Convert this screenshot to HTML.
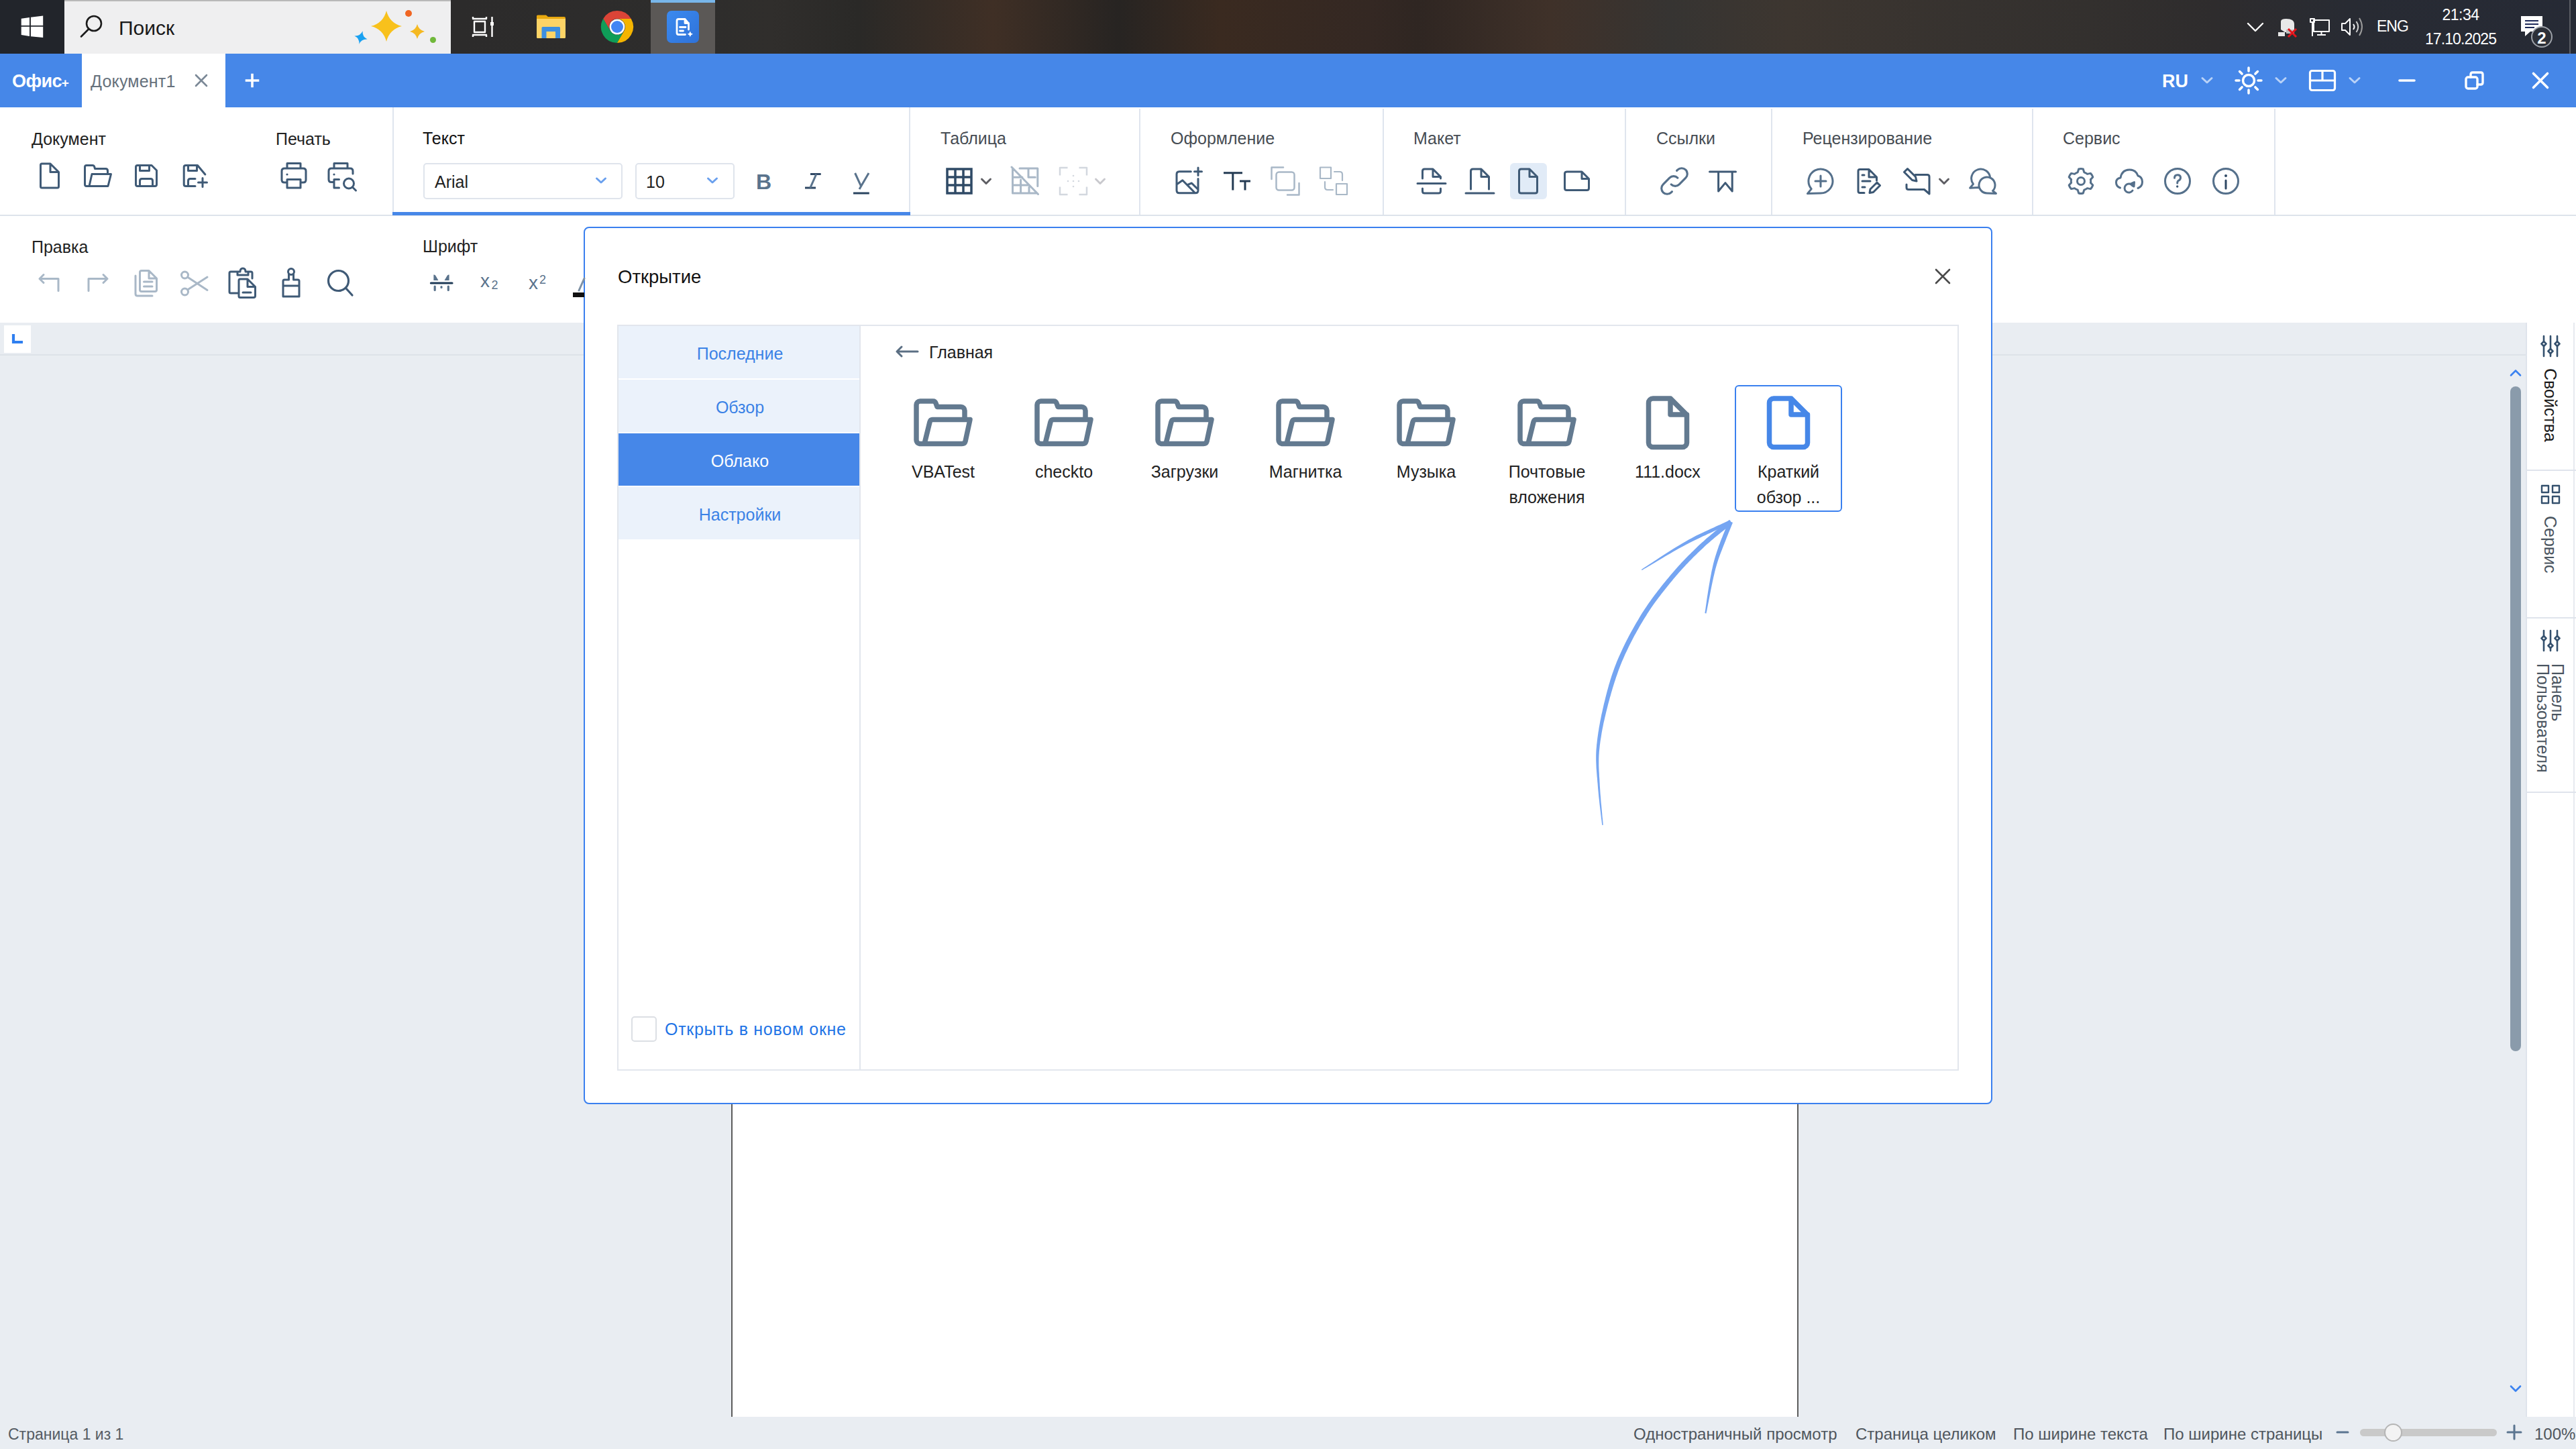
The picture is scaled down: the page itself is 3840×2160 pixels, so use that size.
<!DOCTYPE html>
<html><head><meta charset="utf-8">
<style>
*{box-sizing:border-box;margin:0;padding:0}
html,body{width:3840px;height:2160px;overflow:hidden;background:#e9edf2;font-family:"Liberation Sans",sans-serif}
.a{position:absolute}
.t{position:absolute;line-height:1;white-space:nowrap}
svg{position:absolute;overflow:visible}
</style></head><body>

<div class='a' style='left:0px;top:0px;width:3840px;height:80px;background:linear-gradient(90deg,#23262c 0,#2c2b2b 680px,#2e2d2c 1060px,#302e2c 1150px,#2a2927 1280px,#3f2f25 1480px,#272422 1667px,#3a2a20 1819px,#342823 2042px,#2f2622 2114px,#3f3129 2310px,#363432 2490px,#3d3630 2667px,#36322f 2935px,#33302e 3114px,#2e2c2d 3300px,#282b33 3500px,#262a35 3840px);'></div>
<div class='a' style='left:0px;top:0px;width:96px;height:80px;background:#22252b;'></div>
<div class='a' style='left:96px;top:0px;width:576px;height:80px;background:#efeff0;border-top:2px solid #b9b9b9'></div>
<div class='t' style='left:177px;top:27.0px;font-size:30px;color:#1a1a1a;'>Поиск</div>
<div class='a' style='left:970px;top:0px;width:96px;height:80px;background:#5b5856;'></div>
<div class='a' style='left:970px;top:0px;width:96px;height:4px;background:#78b6ea;'></div>
<div class='a' style='left:0px;top:80px;width:3840px;height:80px;background:#4687e8;'></div>
<div class='a' style='left:122px;top:80px;width:214px;height:80px;background:#ffffff;'></div>
<div class='t' style='left:18px;top:107.5px;font-size:27px;color:#ffffff;font-weight:700;letter-spacing:-0.6px;'>Офис<span style='font-size:19px'>+</span></div>
<div class='t' style='left:135px;top:109.1px;font-size:25px;color:#66717c;letter-spacing:0.2px;'>Документ1</div>
<div class='a' style='left:0px;top:160px;width:3840px;height:321px;background:#ffffff;'></div>
<div class='a' style='left:0px;top:320px;width:3840px;height:2px;background:#dde3eb;'></div>
<div class='a' style='left:585px;top:160px;width:772px;height:161px;background:#ffffff;border-left:2px solid #dfe5ee;border-right:2px solid #dfe5ee'></div>
<div class='a' style='left:585px;top:316px;width:772px;height:5px;background:#4687e8;'></div>
<div class='a' style='left:1698px;top:162px;width:2px;height:158px;background:#dfe5ee;'></div>
<div class='a' style='left:2061px;top:162px;width:2px;height:158px;background:#dfe5ee;'></div>
<div class='a' style='left:2422px;top:162px;width:2px;height:158px;background:#dfe5ee;'></div>
<div class='a' style='left:2640px;top:162px;width:2px;height:158px;background:#dfe5ee;'></div>
<div class='a' style='left:3029px;top:162px;width:2px;height:158px;background:#dfe5ee;'></div>
<div class='a' style='left:3390px;top:162px;width:2px;height:158px;background:#dfe5ee;'></div>
<div class='t' style='left:47px;top:195.1px;font-size:25px;color:#222222;'>Документ</div>
<div class='t' style='left:411px;top:195.1px;font-size:25px;color:#222222;'>Печать</div>
<div class='t' style='left:630px;top:194.1px;font-size:25px;color:#111111;'>Текст</div>
<div class='t' style='left:1402px;top:194.1px;font-size:25px;color:#474d54;'>Таблица</div>
<div class='t' style='left:1745px;top:194.1px;font-size:25px;color:#474d54;'>Оформление</div>
<div class='t' style='left:2107px;top:194.1px;font-size:25px;color:#474d54;'>Макет</div>
<div class='t' style='left:2469px;top:194.1px;font-size:25px;color:#474d54;'>Ссылки</div>
<div class='t' style='left:2687px;top:194.1px;font-size:25px;color:#474d54;'>Рецензирование</div>
<div class='t' style='left:3075px;top:194.1px;font-size:25px;color:#474d54;'>Сервис</div>
<div class='t' style='left:47px;top:356.1px;font-size:25px;color:#222222;'>Правка</div>
<div class='t' style='left:630px;top:355.1px;font-size:25px;color:#222222;'>Шрифт</div>
<div class='a' style='left:631px;top:243px;width:297px;height:54px;background:#ffffff;border:2px solid #dfe4ec;border-radius:5px'></div>
<div class='a' style='left:947px;top:243px;width:148px;height:54px;background:#ffffff;border:2px solid #dfe4ec;border-radius:5px'></div>
<div class='t' style='left:648px;top:259.1px;font-size:25px;color:#222222;'>Arial</div>
<div class='t' style='left:963px;top:259.1px;font-size:25px;color:#222222;'>10</div>
<div class='a' style='left:0px;top:482px;width:3765px;height:48px;background:#e9edf2;border-bottom:2px solid #dde2e8'></div>
<div class='a' style='left:6px;top:485px;width:40px;height:41px;background:#ffffff;'></div>
<div class='a' style='left:1090px;top:530px;width:1591px;height:1582px;background:#ffffff;border-left:2px solid #5c5c5c;border-right:2px solid #5c5c5c'></div>
<div class='a' style='left:3765px;top:481px;width:75px;height:1631px;background:#ffffff;border-left:2px solid #dfe4ec'></div>
<div class='a' style='left:3836px;top:481px;width:2px;height:1631px;background:#e6e9ef;'></div>
<div class='a' style='left:3767px;top:700px;width:73px;height:2px;background:#dfe4ec;'></div>
<div class='a' style='left:3767px;top:920px;width:73px;height:2px;background:#dfe4ec;'></div>
<div class='a' style='left:3767px;top:1180px;width:73px;height:2px;background:#dfe4ec;'></div>
<div class='a' style='left:3742px;top:576px;width:16px;height:991px;background:#8a9bab;border-radius:8px'></div>
<div class='a' style='left:0px;top:2112px;width:3840px;height:48px;background:#e9edf2;'></div>
<div class='t' style='left:12px;top:2126.8px;font-size:23px;color:#555c63;'>Страница 1 из 1</div>
<div class='t' style='left:2435px;top:2126.0px;font-size:24px;color:#4f565d;'>Одностраничный просмотр</div>
<div class='t' style='left:2766px;top:2126.0px;font-size:24px;color:#4f565d;'>Страница целиком</div>
<div class='t' style='left:3001px;top:2126.0px;font-size:24px;color:#4f565d;'>По ширине текста</div>
<div class='t' style='left:3225px;top:2126.0px;font-size:24px;color:#4f565d;'>По ширине страницы</div>
<div class='t' style='left:3778px;top:2126.0px;font-size:24px;color:#4f565d;'>100%</div>
<div class='a' style='left:3518px;top:2130px;width:204px;height:11px;background:#c9c9c9;border-radius:6px'></div>
<div class='a' style='left:3554px;top:2122px;width:27px;height:27px;background:#f3f3f3;border:2px solid #b5b5b5;border-radius:50%'></div>
<div class='a' style='left:870px;top:338px;width:2100px;height:1308px;background:#ffffff;border:2px solid #3a80ef;border-radius:8px'></div>
<div class='t' style='left:921px;top:399.0px;font-size:27.5px;color:#111111;'>Открытие</div>
<div class='a' style='left:920px;top:484px;width:2000px;height:1112px;background:transparent;border:2px solid #e2e6ed'></div>
<div class='a' style='left:1281px;top:486px;width:2px;height:1108px;background:#e2e6ed;'></div>
<div class='a' style='left:922px;top:486px;width:359px;height:78px;background:#ebf2fb;'></div>
<div class='a' style='left:922px;top:566px;width:359px;height:78px;background:#ebf2fb;'></div>
<div class='a' style='left:922px;top:646px;width:359px;height:78px;background:#4687e8;'></div>
<div class='a' style='left:922px;top:726px;width:359px;height:78px;background:#ebf2fb;'></div>
<div class='t' style='left:1103px;top:515.1px;font-size:25px;color:#3b82e6;transform:translateX(-50%);'>Последние</div>
<div class='t' style='left:1103px;top:595.1px;font-size:25px;color:#3b82e6;transform:translateX(-50%);'>Обзор</div>
<div class='t' style='left:1103px;top:675.1px;font-size:25px;color:#ffffff;transform:translateX(-50%);'>Облако</div>
<div class='t' style='left:1103px;top:755.1px;font-size:25px;color:#3b82e6;transform:translateX(-50%);'>Настройки</div>
<div class='t' style='left:1385px;top:513.1px;font-size:25px;color:#222222;'>Главная</div>
<div class='a' style='left:941px;top:1515px;width:38px;height:38px;background:#ffffff;border:2px solid #dcdfe4;border-radius:5px'></div>
<div class='t' style='left:991px;top:1522.1px;font-size:25px;color:#1f74e6;letter-spacing:0.7px;'>Открыть в новом окне</div>
<div class='t' style='left:1406px;top:691.1px;font-size:25px;color:#222222;transform:translateX(-50%);'>VBATest</div>
<div class='t' style='left:1586px;top:691.1px;font-size:25px;color:#222222;transform:translateX(-50%);'>checkto</div>
<div class='t' style='left:1766px;top:691.1px;font-size:25px;color:#222222;transform:translateX(-50%);'>Загрузки</div>
<div class='t' style='left:1946px;top:691.1px;font-size:25px;color:#222222;transform:translateX(-50%);'>Магнитка</div>
<div class='t' style='left:2126px;top:691.1px;font-size:25px;color:#222222;transform:translateX(-50%);'>Музыка</div>
<div class='t' style='left:2306px;top:691.1px;font-size:25px;color:#222222;transform:translateX(-50%);'>Почтовые</div>
<div class='t' style='left:2306px;top:729.1px;font-size:25px;color:#222222;transform:translateX(-50%);'>вложения</div>
<div class='t' style='left:2486px;top:691.1px;font-size:25px;color:#222222;transform:translateX(-50%);'>111.docx</div>
<div class='a' style='left:2586px;top:574px;width:160px;height:189px;background:transparent;border:2px solid #3a80ef;border-radius:6px'></div>
<div class='t' style='left:2666px;top:691.1px;font-size:25px;color:#222222;transform:translateX(-50%);'>Краткий</div>
<div class='t' style='left:2666px;top:729.1px;font-size:25px;color:#222222;transform:translateX(-50%);'>обзор ...</div>
<svg style='left:50.0px;top:238.0px' width='48' height='48' viewBox='-24.0 -24.0 48 48' fill='none' stroke='#3f5a76' stroke-width='3' stroke-linecap='round' stroke-linejoin='round' ><path d='M-13.5 -16 Q-13.5 -18 -11.5 -18 H1 L13.5 -5.5 V16 Q13.5 18 11.5 18 H-11.5 Q-13.5 18 -13.5 16 Z M1 -18 V-5.5 H13.5'/></svg>
<svg style='left:122.0px;top:238.0px' width='48' height='48' viewBox='-24.0 -24.0 48 48' fill='none' stroke='#3f5a76' stroke-width='3' stroke-linecap='round' stroke-linejoin='round' ><path d='M-9 -2.5 H19.5 L15 15.5 H-17 Q-19.5 15.5 -19.5 13 V-13 Q-19.5 -15.5 -17 -15.5 H-8 Q-6 -15.5 -5.3 -13.5 L-4.5 -10.5 H11.5 Q14.5 -10.5 14.5 -7.5 V-2.5 M-9 -2.5 L-13 15.5'/></svg>
<svg style='left:194.0px;top:238.0px' width='48' height='48' viewBox='-24.0 -24.0 48 48' fill='none' stroke='#3f5a76' stroke-width='3' stroke-linecap='round' stroke-linejoin='round' ><path d='M-13 -15.5 H8 L15.5 -8 V13 Q15.5 15.5 13 15.5 H-13 Q-15.5 15.5 -15.5 13 V-13 Q-15.5 -15.5 -13 -15.5 Z M-9.5 -15.5 V-7.5 H4.5 V-15.5 M-9.5 15.5 V7.5 Q-9.5 4.5 -6.5 4.5 H6.5 Q9.5 4.5 9.5 7.5 V15.5'/></svg>
<svg style='left:267.0px;top:238.0px' width='48' height='48' viewBox='-24.0 -24.0 48 48' fill='none' stroke='#3f5a76' stroke-width='3' stroke-linecap='round' stroke-linejoin='round' ><path d='M14.8 -2 L3.5 -15.5 H-14 Q-16.8 -15.5 -16.8 -13 V13 Q-16.8 15.5 -14 15.5 H0 M-10.5 -15.5 V-7.5 H2.5 V-15.5 M-10.5 15.5 V7.5 Q-10.5 4.5 -7.5 4.5 H0 M4.5 10 H17.5 M11 3.5 V16.5'/></svg>
<svg style='left:414.0px;top:238.0px' width='48' height='48' viewBox='-24.0 -24.0 48 48' fill='none' stroke='#3f5a76' stroke-width='3' stroke-linecap='round' stroke-linejoin='round' ><path d='M-10 -11 V-18.5 H10 V-11 M-10 10 H-14 Q-18 10 -18 6 V-7 Q-18 -11 -14 -11 H14 Q18 -11 18 -7 V6 Q18 10 14 10 H10 M-10 5.5 H10 V18 H-10 Z'/><circle cx='-10' cy='-2' r='1.6' fill='#3f5a76' stroke='none'/></svg>
<svg style='left:486.0px;top:238.0px' width='48' height='48' viewBox='-24.0 -24.0 48 48' fill='none' stroke='#3f5a76' stroke-width='3' stroke-linecap='round' stroke-linejoin='round' ><path d='M-12 -11 V-18.5 H8 V-11 M-12 9.5 H-16 Q-20 9.5 -20 5.5 V-7 Q-20 -11 -16 -11 H12 Q16 -11 16 -7 V-3 M-4.5 5.5 H-12 V18 H-4.5'/><circle cx='-12' cy='-2' r='1.6' fill='#3f5a76' stroke='none'/><circle cx='10' cy='11.5' r='7.5'/><path d='M15.5 17 L20.5 22'/></svg>
<svg style='left:872.0px;top:245.0px' width='48' height='48' viewBox='-24.0 -24.0 48 48' fill='none' stroke='#6aa0ee' stroke-width='3' stroke-linecap='round' stroke-linejoin='round' ><path d='M-6.5 -3 L0 3 L6.5 -3'/></svg>
<svg style='left:1038.0px;top:245.0px' width='48' height='48' viewBox='-24.0 -24.0 48 48' fill='none' stroke='#6aa0ee' stroke-width='3' stroke-linecap='round' stroke-linejoin='round' ><path d='M-6.5 -3 L0 3 L6.5 -3'/></svg>
<div class='t' style='left:1127px;top:254.9px;font-size:32px;color:#5a738c;font-weight:700;'>B</div>
<svg style='left:1188.0px;top:246.0px' width='48' height='48' viewBox='-24.0 -24.0 48 48' fill='none' stroke='#5a738c' stroke-width='3' stroke-linecap='butt' stroke-linejoin='round' ><path d='M-4 -10.4 H11.7 M-12 10 H4' stroke='#2f4864'/><path d='M4.8 -10.4 L-4.2 10'/></svg>
<svg style='left:1260.0px;top:246.0px' width='48' height='48' viewBox='-24.0 -24.0 48 48' fill='none' stroke='#5a738c' stroke-width='3' stroke-linecap='butt' stroke-linejoin='round' ><path d='M-9.4 -12 L-0.3 7.8 M11 -12 L-3 12'/><path d='M-12 18 H11.8' stroke='#2a4460'/></svg>
<svg style='left:1406.0px;top:246.0px' width='48' height='48' viewBox='-24.0 -24.0 48 48' fill='none' stroke='#2f4a66' stroke-width='3.5' stroke-linecap='round' stroke-linejoin='miter' ><path d='M-18 -18 H18 V18 H-18 Z M-6 -18 V18 M6 -18 V18 M-18 -6 H18 M-18 6 H18'/></svg>
<svg style='left:1446.0px;top:246.0px' width='48' height='48' viewBox='-24.0 -24.0 48 48' fill='none' stroke='#5f5f64' stroke-width='3' stroke-linecap='round' stroke-linejoin='round' ><path d='M-6.5 -3 L0 3.5 L6.5 -3'/></svg>
<svg style='left:1503.0px;top:246.0px' width='48' height='48' viewBox='-24.0 -24.0 48 48' fill='none' stroke='#a9b8c7' stroke-width='3' stroke-linecap='round' stroke-linejoin='round' ><path d='M-7 -19 H19.8 V7.4 M6 -19 V-5.7 H16.3 M-17.5 -19 V18 H18.3 M-17.5 -5.7 H-3 M-17.5 5.9 H6 M-5.4 -2 V18 M7 9 V18 M-19 -21 L20.5 19.5'/></svg>
<svg style='left:1576.0px;top:246.0px' width='48' height='48' viewBox='-24.0 -24.0 48 48' fill='none' stroke='#d3d8df' stroke-width='2.5' stroke-linecap='butt' stroke-linejoin='round' ><path d='M-20 -8.5 V-20 H-8.5 M8.5 -20 H20 V-8.5 M-20 8.5 V20 H-8.5 M8.5 20 H20 V8.5'/><g fill='#d3d8df' stroke='none'><circle cx='0' cy='-8' r='1.3'/><circle cx='-8' cy='0' r='1.3'/><circle cx='0' cy='0' r='1.3'/><circle cx='8' cy='0' r='1.3'/><circle cx='0' cy='8' r='1.3'/></g></svg>
<svg style='left:1616.0px;top:246.0px' width='48' height='48' viewBox='-24.0 -24.0 48 48' fill='none' stroke='#c9c9ce' stroke-width='3' stroke-linecap='round' stroke-linejoin='round' ><path d='M-6.5 -3 L0 3.5 L6.5 -3'/></svg>
<svg style='left:1747.0px;top:246.0px' width='48' height='48' viewBox='-24.0 -24.0 48 48' fill='none' stroke='#3f5a76' stroke-width='3' stroke-linecap='round' stroke-linejoin='round' ><path d='M4.3 -14.3 H-13 Q-17 -14.3 -17 -10.3 V13.7 Q-17 17.7 -13 17.7 H11 Q15 17.7 15 13.7 V-3.5 M15 -20 V-8.5 M9.5 -14.3 H20.5 M-17 5 L-8.2 -1.3 L9.8 17 M0 5.2 L5.4 3 L15 12.5'/></svg>
<svg style='left:1820.0px;top:246.0px' width='48' height='48' viewBox='-24.0 -24.0 48 48' fill='none' stroke='#243b53' stroke-width='3' stroke-linecap='butt' stroke-linejoin='round' ><path d='M-20 -12.2 H8 M-6.2 -12.2 V13.4 M4 0 H20 M12 0 V13.4'/></svg>
<svg style='left:1892.0px;top:246.0px' width='48' height='48' viewBox='-24.0 -24.0 48 48' fill='none' stroke='#a9b8c7' stroke-width='2.5' stroke-linecap='round' stroke-linejoin='round' ><rect x='-13.5' y='-13.5' width='27' height='27' rx='4'/><path d='M-20.5 -3 V-20.5 H-3 M20.5 3 V20.5 H3'/></svg>
<svg style='left:1964.0px;top:246.0px' width='48' height='48' viewBox='-24.0 -24.0 48 48' fill='none' stroke='#a9b8c7' stroke-width='2.2' stroke-linecap='round' stroke-linejoin='round' ><rect x='-20' y='-20.5' width='16' height='16.5'/><rect x='4' y='4' width='16' height='16'/><path d='M1 -14 H9 Q13 -14 13 -10 V-1 M-13 1 V9 Q-13 13 -9 13 H-1'/></svg>
<div class='a' style='left:2251px;top:243px;width:55px;height:54px;background:#e1ebf7;border-radius:6px'></div>
<svg style='left:2110.0px;top:246.0px' width='48' height='48' viewBox='-24.0 -24.0 48 48' fill='none' stroke='#3f5a76' stroke-width='3' stroke-linecap='round' stroke-linejoin='round' ><path d='M-13.5 -4 V-15 Q-13.5 -18 -10.5 -18 H2 L13.5 -6.5 V-4 M2 -18 V-6.5 H13.5 M-13.5 11 V15 Q-13.5 18 -10.5 18 H10.5 Q13.5 18 13.5 15 V11 M-21 3.6 H21'/></svg>
<svg style='left:2182.0px;top:246.0px' width='48' height='48' viewBox='-24.0 -24.0 48 48' fill='none' stroke='#3f5a76' stroke-width='3' stroke-linecap='round' stroke-linejoin='round' ><path d='M-13.5 12 V-15 Q-13.5 -18 -10.5 -18 H2 L13.5 -6.5 V12 M2 -18 V-6.5 H13.5 M-21 18 H21'/></svg>
<svg style='left:2254.0px;top:246.0px' width='48' height='48' viewBox='-24.0 -24.0 48 48' fill='none' stroke='#3f5a76' stroke-width='3' stroke-linecap='round' stroke-linejoin='round' ><path d='M-13.5 -15 Q-13.5 -18 -10.5 -18 H2 L13.5 -6.5 V15 Q13.5 18 10.5 18 H-10.5 Q-13.5 18 -13.5 15 Z M2 -18 V-6.5 H13.5'/></svg>
<svg style='left:2325.5px;top:246.0px' width='48' height='48' viewBox='-24.0 -24.0 48 48' fill='none' stroke='#3f5a76' stroke-width='3' stroke-linecap='round' stroke-linejoin='round' ><path d='M-17.5 -11 Q-17.5 -14 -14.5 -14 H8 L18.5 -3.5 V10.5 Q18.5 13.5 15.5 13.5 H-14.5 Q-17.5 13.5 -17.5 10.5 Z M8 -14 V-3.5 H18.5'/></svg>
<svg style='left:2472.0px;top:246.0px' width='48' height='48' viewBox='-24.0 -24.0 48 48' fill='none' stroke='#55708b' stroke-width='1.3' stroke-linecap='round' stroke-linejoin='round' ><g transform='scale(2.4) translate(-12,-12)'><path d='M10 14a3.5 3.5 0 0 0 5 0l4 -4a3.5 3.5 0 0 0 -5 -5l-.5 .5 M14 10a3.5 3.5 0 0 0 -5 0l-4 4a3.5 3.5 0 0 0 5 5l.5 -.5'/></g></svg>
<svg style='left:2544.0px;top:246.0px' width='48' height='48' viewBox='-24.0 -24.0 48 48' fill='none' stroke='#3f5a76' stroke-width='3' stroke-linecap='round' stroke-linejoin='round' ><path d='M-19.5 -14 H19.5 M-6.4 -14 V15 L3.9 2.6 L14.2 15 V-14'/></svg>
<svg style='left:2689.0px;top:246.0px' width='48' height='48' viewBox='-24.0 -24.0 48 48' fill='none' stroke='#55708b' stroke-width='3' stroke-linecap='round' stroke-linejoin='round' ><path d='M-12.8 11.6 A18 18 0 1 1 1 18 L-18.6 18.6 Z M-7 0 H9 M1 -8 V8'/></svg>
<svg style='left:2761.0px;top:246.0px' width='48' height='48' viewBox='-24.0 -24.0 48 48' fill='none' stroke='#3c5773' stroke-width='3' stroke-linecap='round' stroke-linejoin='round' ><path d='M-6 17.5 H-12.5 Q-15 17.5 -15 15 V-15 Q-15 -17.5 -12.5 -17.5 H1 L12.5 -6 V-1 M1 -17.5 V-6 H12.5 M-9 -9 H-6 M-9 0 H3 M-9 9 H-5 M2 17.5 L3 12 L13 2 L17.5 6.5 L7.5 16.5 Z'/></svg>
<svg style='left:2834.0px;top:246.0px' width='48' height='48' viewBox='-24.0 -24.0 48 48' fill='none' stroke='#3c5773' stroke-width='3' stroke-linecap='round' stroke-linejoin='round' ><path d='M-3 -9.5 H15 Q18 -9.5 18 -6.5 V19 L10.5 12.5 H-13 Q-16 12.5 -16 9.5 V5 M-19.5 -13.5 L-14.5 -18.5 L-2.5 -6.5 L-1 0 L-7.5 -1.5 Z'/></svg>
<svg style='left:2874.0px;top:246.0px' width='48' height='48' viewBox='-24.0 -24.0 48 48' fill='none' stroke='#5f5f64' stroke-width='3' stroke-linecap='round' stroke-linejoin='round' ><path d='M-6.5 -3 L0 3.5 L6.5 -3'/></svg>
<svg style='left:2932.0px;top:246.0px' width='48' height='48' viewBox='-24.0 -24.0 48 48' fill='none' stroke='#55708b' stroke-width='3' stroke-linecap='round' stroke-linejoin='round' ><path d='M-14.5 4.4 A14 14 0 1 1 -7 9.5 L-19.4 10.2 Z'/><path d='M14.5 14.5 A12 12 0 1 0 6 18 L19.5 18.5 Z' fill='#ffffff'/></svg>
<svg style='left:3077.6px;top:246.0px' width='48' height='48' viewBox='-24.0 -24.0 48 48' fill='none' stroke='#55708b' stroke-width='3' stroke-linecap='round' stroke-linejoin='round' ><path d='M-3.3 -18 Q0 -19 3.3 -18 L4.8 -13.2 Q7.5 -12.2 9.5 -10.6 L14.4 -11.6 Q16.8 -9.2 17.8 -6 L14.4 -2.4 Q15 0 14.4 2.4 L17.8 6 Q16.8 9.2 14.4 11.6 L9.5 10.6 Q7.5 12.2 4.8 13.2 L3.3 18 Q0 19 -3.3 18 L-4.8 13.2 Q-7.5 12.2 -9.5 10.6 L-14.4 11.6 Q-16.8 9.2 -17.8 6 L-14.4 2.4 Q-15 0 -14.4 -2.4 L-17.8 -6 Q-16.8 -9.2 -14.4 -11.6 L-9.5 -10.6 Q-7.5 -12.2 -4.8 -13.2 Z'/><circle cx='0' cy='0' r='5.5'/></svg>
<svg style='left:3150.0px;top:246.0px' width='48' height='48' viewBox='-24.0 -24.0 48 48' fill='none' stroke='#55708b' stroke-width='3' stroke-linecap='round' stroke-linejoin='round' ><path d='M-13.5 10 Q-19.5 8 -19.5 2 Q-19.5 -4 -13 -5 Q-11 -17 0.5 -17 Q10 -17 13 -8 Q19.5 -6 19.5 1 Q19.5 8 13 10.5'/><path d='M5 14 A6.5 6.5 0 1 1 5 7'/><path d='M2 4 L7.5 1.5 L7 8 Z' fill='#55708b'/></svg>
<svg style='left:3221.6px;top:246.0px' width='48' height='48' viewBox='-24.0 -24.0 48 48' fill='none' stroke='#55708b' stroke-width='3' stroke-linecap='round' stroke-linejoin='round' ><circle cx='0' cy='0' r='18.5'/><path d='M-4.5 -4.8 Q-4.5 -9.3 0 -9.3 Q4.5 -9.3 4.5 -5.3 Q4.5 -2 1 -0.5 Q-0.3 0.5 -0.3 3'/><circle cx='-0.3' cy='8' r='1.7' fill='#3c5773' stroke='none'/></svg>
<svg style='left:3293.6px;top:246.0px' width='48' height='48' viewBox='-24.0 -24.0 48 48' fill='none' stroke='#55708b' stroke-width='3' stroke-linecap='round' stroke-linejoin='round' ><circle cx='0' cy='0' r='18.5'/><path d='M0 -1 V11' stroke='#2f4864'/><circle cx='0' cy='-8' r='2' fill='#2f4864' stroke='none'/></svg>
<svg style='left:49.0px;top:397.0px' width='48' height='48' viewBox='-24.0 -24.0 48 48' fill='none' stroke='#a9b8c7' stroke-width='3' stroke-linecap='round' stroke-linejoin='round' ><path d='M-14 -5.5 H14 V12.5 M-8 -11.5 L-14 -5.5 L-8 0.5'/></svg>
<svg style='left:122.0px;top:397.0px' width='48' height='48' viewBox='-24.0 -24.0 48 48' fill='none' stroke='#a9b8c7' stroke-width='3' stroke-linecap='round' stroke-linejoin='round' ><path d='M-14 12.5 V-5.5 H14 M8 -11.5 L14 -5.5 L8 0.5'/></svg>
<svg style='left:194.0px;top:397.0px' width='48' height='48' viewBox='-24.0 -24.0 48 48' fill='none' stroke='#a9b8c7' stroke-width='3' stroke-linecap='round' stroke-linejoin='round' ><path d='M-9.5 11 V-15 Q-9.5 -17.5 -7 -17.5 H4 L15.5 -6 V11 Q15.5 13.5 13 13.5 H-7 Q-9.5 13.5 -9.5 11 Z M4 -17.5 V-6 H15.5 M-3.5 -1 H9 M-3.5 6 H9 M-16 -10 V17 Q-16 20 -13 20 H9'/></svg>
<svg style='left:266.0px;top:397.0px' width='48' height='48' viewBox='-24.0 -24.0 48 48' fill='none' stroke='#a9b8c7' stroke-width='3' stroke-linecap='round' stroke-linejoin='round' ><circle cx='-14.5' cy='-11' r='5'/><circle cx='-14.5' cy='14' r='5'/><path d='M-10.5 -8 L19 11.5 M-10.5 11 L19 -8'/></svg>
<svg style='left:338.0px;top:397.0px' width='48' height='48' viewBox='-24.0 -24.0 48 48' fill='none' stroke='#3f5a76' stroke-width='3' stroke-linecap='round' stroke-linejoin='round' ><path d='M-4 -16 H-8 V-11 H8 V-16 H4 Q4 -21 0 -21 Q-4 -21 -4 -16 Z M-8 -16 H-18 Q-20 -16 -20 -14 V14 Q-20 16 -18 16 H-6 M8 -16 H12 Q14 -16 14 -14 V-6 M-6 -3 Q-6 -5 -4 -5 H7 L18.5 6.5 V20 Q18.5 22.5 16 22.5 H-4 Q-6 22.5 -6 20.5 Z M7 -5 V6.5 H18.5 M0 15 H12'/></svg>
<svg style='left:410.0px;top:397.0px' width='48' height='48' viewBox='-24.0 -24.0 48 48' fill='none' stroke='#3f5a76' stroke-width='3' stroke-linecap='round' stroke-linejoin='round' ><circle cx='0' cy='-16' r='4.5'/><path d='M-3.5 -12.5 V-4 H-10 Q-12 -4 -12 -2 V21 H12 V-2 Q12 -4 10 -4 H3.5 V-12.5 M-12 5 H12'/></svg>
<svg style='left:481.0px;top:397.0px' width='48' height='48' viewBox='-24.0 -24.0 48 48' fill='none' stroke='#3f5a76' stroke-width='3.2' stroke-linecap='round' stroke-linejoin='round' ><circle cx='-0.5' cy='-2.5' r='15'/><path d='M10.5 8.5 L20 19'/></svg>
<svg style='left:633.6px;top:397.0px' width='48' height='48' viewBox='-24.0 -24.0 48 48' fill='none' stroke='#5a738c' stroke-width='3.2' stroke-linecap='round' stroke-linejoin='round' ><path d='M-11.6 -11.4 Q-9 -12 -8 -9 L-4.5 -3 H-11.6 Z M11.6 -11.4 Q9 -12 8 -9 L4.5 -3 H11.6 Z' fill='#5a738c' stroke='none'/><path d='M-15.6 1 H16' stroke='#1f3a57'/><path d='M-9.8 6 V11.5 M10.3 6 V11.5 M0 6.5 V7.5'/></svg>
<div class='t' style='left:716px;top:404.6px;font-size:28px;color:#5a738c;'>x</div>
<div class='t' style='left:732.5px;top:416.4px;font-size:18px;color:#5a738c;'>2</div>
<div class='t' style='left:788px;top:408.0px;font-size:28px;color:#5a738c;'>x</div>
<div class='t' style='left:804px;top:408.0px;font-size:18px;color:#5a738c;'>2</div>
<div class='a' style='left:854px;top:436px;width:17px;height:7px;background:#111111;'></div>
<svg style='left:842.0px;top:400.0px' width='48' height='48' viewBox='-24.0 -24.0 48 48' fill='none' stroke='#7d90a4' stroke-width='3' stroke-linecap='round' stroke-linejoin='round' ><path d='M-3 9 L5 -9'/></svg>
<svg style='left:276.0px;top:96.0px' width='48' height='48' viewBox='-24.0 -24.0 48 48' fill='none' stroke='#7b8896' stroke-width='2.6' stroke-linecap='round' stroke-linejoin='round' ><path d='M-8 -8 L8 8 M8 -8 L-8 8'/></svg>
<svg style='left:352.0px;top:96.0px' width='48' height='48' viewBox='-24.0 -24.0 48 48' fill='none' stroke='#ffffff' stroke-width='3.6' stroke-linecap='butt' stroke-linejoin='round' ><path d='M-10.3 0 H10.3 M0 -10.3 V10.3'/></svg>
<div class='t' style='left:3223px;top:107.5px;font-size:27px;color:#ffffff;font-weight:700;'>RU</div>
<svg style='left:3266.0px;top:96.0px' width='48' height='48' viewBox='-24.0 -24.0 48 48' fill='none' stroke='#b9d2f7' stroke-width='3' stroke-linecap='round' stroke-linejoin='round' ><path d='M-7 -3.5 L0 3 L7 -3.5'/></svg>
<svg style='left:3376.0px;top:96.0px' width='48' height='48' viewBox='-24.0 -24.0 48 48' fill='none' stroke='#b9d2f7' stroke-width='3' stroke-linecap='round' stroke-linejoin='round' ><path d='M-7 -3.5 L0 3 L7 -3.5'/></svg>
<svg style='left:3486.0px;top:96.0px' width='48' height='48' viewBox='-24.0 -24.0 48 48' fill='none' stroke='#b9d2f7' stroke-width='3' stroke-linecap='round' stroke-linejoin='round' ><path d='M-7 -3.5 L0 3 L7 -3.5'/></svg>
<svg style='left:3328.0px;top:96.0px' width='48' height='48' viewBox='-24.0 -24.0 48 48' fill='none' stroke='#ffffff' stroke-width='3.5' stroke-linecap='round' stroke-linejoin='round' ><circle cx='0' cy='0' r='8.5'/><path d='M14.00 0.00 L19.00 0.00'/><path d='M9.90 9.90 L13.44 13.44'/><path d='M0.00 14.00 L0.00 19.00'/><path d='M-9.90 9.90 L-13.44 13.44'/><path d='M-14.00 0.00 L-19.00 0.00'/><path d='M-9.90 -9.90 L-13.44 -13.44'/><path d='M-0.00 -14.00 L-0.00 -19.00'/><path d='M9.90 -9.90 L13.44 -13.44'/></svg>
<svg style='left:3438.0px;top:96.0px' width='48' height='48' viewBox='-24.0 -24.0 48 48' fill='none' stroke='#ffffff' stroke-width='3.2' stroke-linecap='round' stroke-linejoin='round' ><rect x='-18.5' y='-14.5' width='37' height='29' rx='3'/><path d='M-18.5 0 H18.5 M0 -14.5 V0'/></svg>
<svg style='left:3564.0px;top:96.0px' width='48' height='48' viewBox='-24.0 -24.0 48 48' fill='none' stroke='#ffffff' stroke-width='3.6' stroke-linecap='round' stroke-linejoin='round' ><path d='M-11 0 H11'/></svg>
<svg style='left:3665.0px;top:96.0px' width='48' height='48' viewBox='-24.0 -24.0 48 48' fill='none' stroke='#ffffff' stroke-width='3.4' stroke-linecap='round' stroke-linejoin='round' ><rect x='-13' y='-5' width='17' height='17' rx='3'/><path d='M-6 -5 V-9 Q-6 -12 -3 -12 H9 Q12 -12 12 -9 V3 Q12 6 9 6 H4'/></svg>
<svg style='left:3763.0px;top:96.0px' width='48' height='48' viewBox='-24.0 -24.0 48 48' fill='none' stroke='#ffffff' stroke-width='3.6' stroke-linecap='round' stroke-linejoin='round' ><path d='M-10.5 -10.5 L10.5 10.5 M10.5 -10.5 L-10.5 10.5'/></svg>
<svg style='left:31px;top:23px' width='34' height='34' viewBox='0 0 34 34'><path fill='#fff' d='M0.7 4.8 L13 3 V15.1 H0.7 Z M14.9 2.7 L33.2 0.6 V15.1 H14.9 Z M0.7 16.7 H13 V31 L0.7 28.9 Z M14.9 16.7 H33.2 V33 L14.9 31.3 Z'/></svg>
<svg style='left:114.0px;top:14.0px' width='48' height='48' viewBox='-24.0 -24.0 48 48' fill='none' stroke='#1b1b1b' stroke-width='2.6' stroke-linecap='round' stroke-linejoin='round' ><circle cx='2' cy='-3' r='11'/><path d='M-6 5.5 L-17 16.5'/></svg>
<svg style='left:553px;top:16px' width='46' height='46' viewBox='-10 -10 20 20'><path fill='#f8c11c' d='M0 -10 Q2 -2 10 0 Q2 2 0 10 Q-2 2 -10 0 Q-2 -2 0 -10 Z'/></svg>
<svg style='left:611px;top:36px' width='22' height='22' viewBox='-10 -10 20 20'><path fill='#f5b921' d='M0 -10 Q2 -2 10 0 Q2 2 0 10 Q-2 2 -10 0 Q-2 -2 0 -10 Z'/></svg>
<svg style='left:528px;top:46px' width='20' height='20' viewBox='-10 -10 20 20'><path fill='#1aa1f1' transform='rotate(15)' d='M0 -10 Q1.5 -1.5 10 0 Q1.5 1.5 0 10 Q-1.5 1.5 -10 0 Q-1.5 -1.5 0 -10 Z'/></svg>
<div class='a' style='left:604px;top:15px;width:10px;height:10px;background:#f06623;border-radius:50%'></div>
<div class='a' style='left:641px;top:55px;width:9px;height:9px;background:#70b83a;border-radius:50%'></div>
<svg style='left:696.0px;top:15.0px' width='48' height='48' viewBox='-24.0 -24.0 48 48' fill='none' stroke='#ffffff' stroke-width='2.4' stroke-linecap='butt' stroke-linejoin='round' ><path d='M-15 -14 V-11 H5 V-14 M-15 16 V13 H5 V16 M-13 -7 H3 V9 H-13 Z M13.5 -14 V16'/><rect x='11' y='-6' width='5' height='5' fill='#fff' stroke='none'/></svg>
<svg style='left:800px;top:21px' width='43' height='37' viewBox='0 0 43 37'><path fill='#e9a90f' d='M0 3 Q0 1.5 1.5 1.5 H14 L17 4 H41 Q43 4 43 6 V10 H0 Z'/><path fill='#fdd466' d='M0 7 H43 V34.5 Q43 36 41.5 36 H1.5 Q0 36 0 34.5 Z'/><path fill='#3d8fdf' d='M7.5 20.5 Q7.5 19 9 19 H33.5 Q35 19 35 20.5 V36 H28 V26 H14.5 V36 H7.5 Z'/></svg>
<svg style='left:896px;top:16px' width='48' height='48' viewBox='-24 -24 48 48'><path fill='#db4437' d='M0 -24 A24 24 0 0 1 20.8 -12 H0 A12 12 0 0 0 -10.4 6 L-20.8 -12 A24 24 0 0 1 0 -24Z'/><path fill='#0f9d58' d='M-20.8 -12 L-10.4 6 A12 12 0 0 0 0 12 L-10.4 21.6 A24 24 0 0 1 -20.8 -12Z'/><path fill='#0f9d58' d='M-20.8 -12 L-10.4 6 A12 12 0 0 0 10.4 6 L0 24 A24 24 0 0 1 -20.8 -12Z'/><path fill='#f4b400' d='M20.8 -12 A24 24 0 0 1 0 24 L10.4 6 A12 12 0 0 0 0 -12 Z'/><circle r='11.5' fill='#fff'/><circle r='9' fill='#4285f4'/></svg>
<svg style='left:994px;top:16px' width='48' height='48' viewBox='0 0 48 48'><defs><linearGradient id='ag' x1='0' y1='0' x2='1' y2='1'><stop offset='0' stop-color='#3b8af0'/><stop offset='1' stop-color='#2f72d8'/></linearGradient></defs><rect width='48' height='48' rx='7' fill='url(#ag)'/><path fill='none' stroke='#fff' stroke-width='2.8' stroke-linecap='round' stroke-linejoin='round' d='M32.5 28 V19 L27 12.5 H17.5 Q15 12.5 15 15 V33 Q15 35.5 17.5 35.5 H27.5 M27 12.5 V18.5 H32.5 M19.5 24.5 H28 M19.5 30 H24.5'/><path fill='#fff' d='M34.8 30.5 L36.2 33.4 L39 34.8 L36.2 36.2 L34.8 39 L33.4 36.2 L30.6 34.8 L33.4 33.4 Z'/></svg>
<svg style='left:3338.0px;top:16.0px' width='48' height='48' viewBox='-24.0 -24.0 48 48' fill='none' stroke='#ffffff' stroke-width='2.4' stroke-linecap='round' stroke-linejoin='round' ><path d='M-11 -5 L0 6 L11 -5'/></svg>
<svg style='left:3394px;top:28px' width='32' height='28' viewBox='0 0 32 28'><path fill='#e8e8e8' d='M6 4 Q6 0 14 0 Q26 0 26 8 V16 H14 V20 H2 V26 H12 V20 L6 16 Z'/><path fill='#bdbdbd' d='M14 16 H26 V22 H14 Z'/><path fill='none' stroke='#e3141b' stroke-width='3' d='M17 15 L29 27 M29 15 L17 27'/></svg>
<svg style='left:3434.0px;top:17.0px' width='48' height='48' viewBox='-24.0 -24.0 48 48' fill='none' stroke='#ffffff' stroke-width='2' stroke-linecap='butt' stroke-linejoin='round' ><path d='M-9 -11 H14 V6 H-9 Z M2.5 6 V11 M-4 11 H9 M-14 -13 H-8 V-8 H-14 Z M-11 -8 V13' /></svg>
<svg style='left:3481.0px;top:16.0px' width='48' height='48' viewBox='-24.0 -24.0 48 48' fill='none' stroke='#ffffff' stroke-width='2' stroke-linecap='butt' stroke-linejoin='round' ><path d='M-14 -5 H-9 L-2 -12 V12 L-9 5 H-14 Z M3 -4 Q6 0 3 4' /><path d='M7.5 -8 Q13 0 7.5 8' stroke='#cfcfcf'/><path d='M12 -13 Q20 0 12 13' stroke='#9a9a9a'/></svg>
<div class='t' style='left:3543px;top:27.8px;font-size:23px;color:#ffffff;letter-spacing:-1px;'>ENG</div>
<div class='t' style='left:3668px;top:10.8px;font-size:23px;color:#ffffff;letter-spacing:-0.5px;transform:translateX(-50%);'>21:34</div>
<div class='t' style='left:3668px;top:46.8px;font-size:23px;color:#ffffff;letter-spacing:-0.9px;transform:translateX(-50%);'>17.10.2025</div>
<svg style='left:3758px;top:23px' width='50' height='50' viewBox='0 0 50 50'><path fill='#fff' d='M0 1 H32 V24 H14 L6 31 V24 H0 Z'/><path stroke='#1e2a5a' stroke-width='2' d='M6 8 H26 M6 13 H26 M6 18 H20'/><circle cx='31' cy='32' r='15' fill='#2d3038' stroke='#9da1a8' stroke-width='2'/></svg>
<div class='t' style='left:3789px;top:45.0px;font-size:24px;color:#ffffff;font-weight:700;transform:translateX(-50%);'>2</div>
<div class='a' style='left:3830px;top:0px;width:2px;height:80px;background:#5a5c63;'></div>
<svg style='left:2872.0px;top:388.0px' width='48' height='48' viewBox='-24.0 -24.0 48 48' fill='none' stroke='#4a4a4a' stroke-width='2.6' stroke-linecap='round' stroke-linejoin='round' ><path d='M-10 -10 L10 10 M10 -10 L-10 10'/></svg>
<svg style='left:1328.0px;top:500.0px' width='48' height='48' viewBox='-24.0 -24.0 48 48' fill='none' stroke='#5b6f83' stroke-width='3' stroke-linecap='round' stroke-linejoin='round' ><path d='M-15 0 H16 M-8 -7 L-15 0 L-8 7'/></svg>
<svg style='left:1358.0px;top:582.0px' width='96' height='96' viewBox='-48.0 -48.0 96 96' fill='none' stroke='#637a90' stroke-width='7.5' stroke-linecap='round' stroke-linejoin='round' ><path d='M-35 31.5 H28 Q32 31.5 33 28 L40 -4.5 H-16 Q-19 -4.5 -20 -1 L-28 31.5 M-35 31.5 A5.5 5.5 0 0 1 -40 26 V-26.5 A5.5 5.5 0 0 1 -34.5 -32 H-15 Q-12 -32 -11 -29 L-9 -23.5 H26.5 A5.5 5.5 0 0 1 32 -18 V-4.5'/></svg>
<svg style='left:1538.0px;top:582.0px' width='96' height='96' viewBox='-48.0 -48.0 96 96' fill='none' stroke='#637a90' stroke-width='7.5' stroke-linecap='round' stroke-linejoin='round' ><path d='M-35 31.5 H28 Q32 31.5 33 28 L40 -4.5 H-16 Q-19 -4.5 -20 -1 L-28 31.5 M-35 31.5 A5.5 5.5 0 0 1 -40 26 V-26.5 A5.5 5.5 0 0 1 -34.5 -32 H-15 Q-12 -32 -11 -29 L-9 -23.5 H26.5 A5.5 5.5 0 0 1 32 -18 V-4.5'/></svg>
<svg style='left:1718.0px;top:582.0px' width='96' height='96' viewBox='-48.0 -48.0 96 96' fill='none' stroke='#637a90' stroke-width='7.5' stroke-linecap='round' stroke-linejoin='round' ><path d='M-35 31.5 H28 Q32 31.5 33 28 L40 -4.5 H-16 Q-19 -4.5 -20 -1 L-28 31.5 M-35 31.5 A5.5 5.5 0 0 1 -40 26 V-26.5 A5.5 5.5 0 0 1 -34.5 -32 H-15 Q-12 -32 -11 -29 L-9 -23.5 H26.5 A5.5 5.5 0 0 1 32 -18 V-4.5'/></svg>
<svg style='left:1898.0px;top:582.0px' width='96' height='96' viewBox='-48.0 -48.0 96 96' fill='none' stroke='#637a90' stroke-width='7.5' stroke-linecap='round' stroke-linejoin='round' ><path d='M-35 31.5 H28 Q32 31.5 33 28 L40 -4.5 H-16 Q-19 -4.5 -20 -1 L-28 31.5 M-35 31.5 A5.5 5.5 0 0 1 -40 26 V-26.5 A5.5 5.5 0 0 1 -34.5 -32 H-15 Q-12 -32 -11 -29 L-9 -23.5 H26.5 A5.5 5.5 0 0 1 32 -18 V-4.5'/></svg>
<svg style='left:2078.0px;top:582.0px' width='96' height='96' viewBox='-48.0 -48.0 96 96' fill='none' stroke='#637a90' stroke-width='7.5' stroke-linecap='round' stroke-linejoin='round' ><path d='M-35 31.5 H28 Q32 31.5 33 28 L40 -4.5 H-16 Q-19 -4.5 -20 -1 L-28 31.5 M-35 31.5 A5.5 5.5 0 0 1 -40 26 V-26.5 A5.5 5.5 0 0 1 -34.5 -32 H-15 Q-12 -32 -11 -29 L-9 -23.5 H26.5 A5.5 5.5 0 0 1 32 -18 V-4.5'/></svg>
<svg style='left:2258.0px;top:582.0px' width='96' height='96' viewBox='-48.0 -48.0 96 96' fill='none' stroke='#637a90' stroke-width='7.5' stroke-linecap='round' stroke-linejoin='round' ><path d='M-35 31.5 H28 Q32 31.5 33 28 L40 -4.5 H-16 Q-19 -4.5 -20 -1 L-28 31.5 M-35 31.5 A5.5 5.5 0 0 1 -40 26 V-26.5 A5.5 5.5 0 0 1 -34.5 -32 H-15 Q-12 -32 -11 -29 L-9 -23.5 H26.5 A5.5 5.5 0 0 1 32 -18 V-4.5'/></svg>
<svg style='left:2438.0px;top:581.5px' width='96' height='96' viewBox='-48.0 -48.0 96 96' fill='none' stroke='#637a90' stroke-width='7.5' stroke-linecap='round' stroke-linejoin='round' ><path d='M-22 -36 H4 L28.5 -11.5 V30 A6.5 6.5 0 0 1 22 36.5 H-22 A6.5 6.5 0 0 1 -28.5 30 V-29.5 A6.5 6.5 0 0 1 -22 -36 Z M4 -36 V-12 H28.5'/></svg>
<svg style='left:2618.0px;top:581.5px' width='96' height='96' viewBox='-48.0 -48.0 96 96' fill='none' stroke='#4687e8' stroke-width='7.5' stroke-linecap='round' stroke-linejoin='round' ><path d='M-22 -36 H4 L28.5 -11.5 V30 A6.5 6.5 0 0 1 22 36.5 H-22 A6.5 6.5 0 0 1 -28.5 30 V-29.5 A6.5 6.5 0 0 1 -22 -36 Z M4 -36 V-12 H28.5'/></svg>
<svg style='left:0;top:0' width='3840' height='2160' viewBox='0 0 3840 2160'><g fill='#6a9ef1' opacity='0.92'><path d='M2389.7 1229.9 L2389.6 1228.3 L2389.5 1226.4 L2389.3 1224.2 L2389.1 1221.8 L2388.8 1219.2 L2388.5 1216.3 L2388.3 1213.4 L2388.0 1210.3 L2387.7 1207.0 L2387.4 1203.7 L2387.1 1200.3 L2386.7 1196.9 L2386.4 1193.4 L2386.2 1190.0 L2385.9 1186.6 L2385.6 1183.2 L2385.4 1179.9 L2385.2 1176.8 L2385.0 1173.7 L2384.8 1170.8 L2384.7 1168.0 L2384.5 1165.2 L2384.4 1162.5 L2384.2 1159.8 L2384.0 1157.2 L2383.9 1154.6 L2383.8 1152.0 L2383.6 1149.4 L2383.5 1146.8 L2383.4 1144.2 L2383.3 1141.6 L2383.3 1139.0 L2383.3 1136.4 L2383.3 1133.8 L2383.3 1131.1 L2383.4 1128.4 L2383.5 1125.7 L2383.7 1122.9 L2383.9 1120.1 L2384.2 1117.2 L2384.5 1114.2 L2384.8 1111.2 L2385.2 1108.2 L2385.6 1105.1 L2386.1 1102.0 L2386.6 1098.9 L2387.1 1095.7 L2387.6 1092.5 L2388.2 1089.3 L2388.8 1086.1 L2389.5 1082.8 L2390.1 1079.5 L2390.8 1076.3 L2391.6 1073.0 L2392.3 1069.7 L2393.1 1066.4 L2393.9 1063.0 L2394.7 1059.7 L2395.5 1056.4 L2396.4 1053.1 L2397.2 1049.8 L2398.1 1046.5 L2399.0 1043.2 L2399.9 1039.8 L2400.9 1036.4 L2401.8 1033.1 L2402.8 1029.7 L2403.8 1026.3 L2404.8 1022.9 L2405.9 1019.5 L2407.0 1016.1 L2408.1 1012.7 L2409.2 1009.3 L2410.4 1005.9 L2411.6 1002.5 L2412.8 999.1 L2414.1 995.7 L2415.4 992.3 L2416.7 988.9 L2418.1 985.6 L2419.6 982.2 L2421.1 978.8 L2422.6 975.3 L2424.2 971.9 L2425.9 968.4 L2427.5 964.9 L2429.2 961.5 L2431.0 958.0 L2432.8 954.5 L2434.6 951.1 L2436.4 947.6 L2438.3 944.2 L2440.2 940.8 L2442.1 937.4 L2444.0 934.0 L2445.9 930.7 L2447.9 927.4 L2449.8 924.2 L2451.8 921.0 L2453.8 917.9 L2455.7 914.8 L2457.7 911.7 L2459.8 908.6 L2461.8 905.6 L2463.9 902.6 L2466.0 899.6 L2468.2 896.6 L2470.3 893.7 L2472.5 890.8 L2474.7 887.9 L2476.9 885.1 L2479.1 882.2 L2481.3 879.4 L2483.5 876.7 L2485.7 873.9 L2487.9 871.2 L2490.1 868.6 L2492.3 865.9 L2494.4 863.3 L2496.6 860.8 L2498.7 858.2 L2500.9 855.8 L2503.0 853.3 L2505.1 850.9 L2507.3 848.5 L2509.4 846.2 L2511.5 843.9 L2513.7 841.6 L2515.8 839.4 L2518.0 837.1 L2520.1 834.9 L2522.3 832.8 L2524.4 830.6 L2526.5 828.5 L2528.7 826.4 L2530.8 824.3 L2533.0 822.3 L2535.1 820.2 L2537.3 818.2 L2539.4 816.2 L2541.6 814.1 L2543.8 812.1 L2546.2 810.0 L2548.6 807.9 L2551.0 805.8 L2553.5 803.7 L2556.0 801.6 L2558.5 799.6 L2561.0 797.5 L2563.4 795.6 L2565.8 793.6 L2568.1 791.8 L2570.3 790.0 L2572.4 788.3 L2574.5 786.7 L2576.3 785.2 L2578.1 783.8 L2579.6 782.5 L2581.0 781.4 L2582.2 780.4 L2577.8 775.0 L2576.6 776.0 L2575.2 777.1 L2573.7 778.3 L2572.0 779.7 L2570.1 781.2 L2568.1 782.8 L2565.9 784.5 L2563.7 786.3 L2561.4 788.2 L2559.0 790.1 L2556.5 792.1 L2554.0 794.2 L2551.5 796.3 L2549.0 798.4 L2546.5 800.5 L2544.0 802.6 L2541.6 804.8 L2539.2 806.9 L2536.8 809.0 L2534.6 811.0 L2532.4 813.1 L2530.3 815.1 L2528.1 817.2 L2526.0 819.3 L2523.8 821.4 L2521.6 823.5 L2519.5 825.7 L2517.3 827.8 L2515.1 830.0 L2512.9 832.3 L2510.8 834.5 L2508.6 836.8 L2506.4 839.1 L2504.3 841.4 L2502.1 843.8 L2499.9 846.2 L2497.7 848.7 L2495.6 851.2 L2493.4 853.7 L2491.2 856.2 L2489.1 858.8 L2486.9 861.5 L2484.7 864.1 L2482.5 866.8 L2480.2 869.5 L2478.0 872.3 L2475.8 875.1 L2473.6 877.9 L2471.3 880.8 L2469.1 883.7 L2466.9 886.6 L2464.7 889.5 L2462.5 892.5 L2460.4 895.5 L2458.2 898.6 L2456.1 901.6 L2454.0 904.7 L2451.9 907.8 L2449.8 911.0 L2447.8 914.1 L2445.8 917.3 L2443.9 920.6 L2441.9 923.9 L2439.9 927.2 L2438.0 930.5 L2436.0 933.9 L2434.1 937.4 L2432.2 940.8 L2430.3 944.3 L2428.4 947.8 L2426.6 951.3 L2424.8 954.8 L2423.0 958.3 L2421.2 961.9 L2419.5 965.4 L2417.9 968.9 L2416.3 972.4 L2414.7 975.9 L2413.1 979.4 L2411.7 982.8 L2410.2 986.3 L2408.9 989.8 L2407.5 993.2 L2406.2 996.7 L2405.0 1000.2 L2403.8 1003.6 L2402.6 1007.1 L2401.5 1010.6 L2400.4 1014.1 L2399.4 1017.5 L2398.3 1021.0 L2397.4 1024.4 L2396.4 1027.9 L2395.5 1031.3 L2394.6 1034.8 L2393.7 1038.2 L2392.9 1041.6 L2392.1 1045.0 L2391.2 1048.3 L2390.4 1051.7 L2389.7 1055.0 L2388.9 1058.4 L2388.2 1061.7 L2387.4 1065.1 L2386.7 1068.4 L2386.1 1071.8 L2385.4 1075.1 L2384.8 1078.5 L2384.2 1081.8 L2383.6 1085.1 L2383.1 1088.4 L2382.5 1091.7 L2382.1 1094.9 L2381.6 1098.2 L2381.2 1101.3 L2380.8 1104.5 L2380.5 1107.6 L2380.1 1110.7 L2379.9 1113.8 L2379.6 1116.8 L2379.4 1119.8 L2379.3 1122.7 L2379.2 1125.5 L2379.2 1128.3 L2379.2 1131.1 L2379.2 1133.8 L2379.3 1136.5 L2379.4 1139.1 L2379.5 1141.8 L2379.6 1144.4 L2379.8 1147.0 L2380.0 1149.6 L2380.2 1152.2 L2380.4 1154.8 L2380.6 1157.4 L2380.9 1160.1 L2381.1 1162.8 L2381.3 1165.5 L2381.6 1168.2 L2381.8 1171.0 L2382.0 1173.9 L2382.3 1177.0 L2382.6 1180.2 L2382.9 1183.5 L2383.2 1186.8 L2383.6 1190.2 L2384.0 1193.7 L2384.3 1197.1 L2384.7 1200.6 L2385.1 1203.9 L2385.5 1207.3 L2385.9 1210.5 L2386.2 1213.6 L2386.6 1216.6 L2386.9 1219.4 L2387.3 1222.0 L2387.6 1224.4 L2387.8 1226.5 L2388.1 1228.5 L2388.3 1230.1 Z'/><path d='M2447.5 850.0 L2449.4 848.9 L2451.7 847.6 L2454.2 846.2 L2457.0 844.5 L2460.1 842.7 L2463.3 840.7 L2466.8 838.7 L2470.4 836.5 L2474.2 834.3 L2478.0 832.0 L2482.0 829.6 L2485.9 827.3 L2490.0 824.9 L2494.0 822.6 L2498.0 820.3 L2501.9 818.1 L2505.7 816.0 L2509.5 813.9 L2513.1 812.0 L2516.5 810.2 L2519.9 808.5 L2523.4 806.7 L2527.0 805.0 L2530.7 803.3 L2534.4 801.4 L2538.2 799.6 L2542.0 797.9 L2545.7 796.1 L2549.4 794.4 L2553.0 792.7 L2556.6 791.1 L2560.1 789.6 L2563.4 788.1 L2566.5 786.6 L2569.5 785.3 L2572.3 784.0 L2574.9 782.9 L2577.2 781.8 L2579.3 780.9 L2581.1 780.1 L2578.9 775.3 L2577.1 776.2 L2575.1 777.1 L2572.8 778.1 L2570.2 779.3 L2567.4 780.6 L2564.4 781.9 L2561.2 783.3 L2557.9 784.8 L2554.5 786.4 L2550.9 788.0 L2547.2 789.7 L2543.5 791.4 L2539.7 793.2 L2536.0 794.9 L2532.2 796.8 L2528.4 798.6 L2524.8 800.5 L2521.2 802.4 L2517.7 804.3 L2514.3 806.2 L2510.9 808.2 L2507.4 810.3 L2503.7 812.5 L2499.9 814.8 L2496.1 817.1 L2492.1 819.6 L2488.2 822.1 L2484.3 824.6 L2480.4 827.1 L2476.5 829.5 L2472.7 832.0 L2469.1 834.4 L2465.5 836.7 L2462.2 838.9 L2459.0 841.0 L2456.0 842.9 L2453.3 844.7 L2450.9 846.3 L2448.7 847.8 L2446.9 849.0 Z'/><path d='M2577.0 776.5 L2576.3 778.2 L2575.6 780.2 L2574.7 782.4 L2573.7 784.8 L2572.6 787.5 L2571.4 790.4 L2570.2 793.4 L2568.9 796.6 L2567.6 799.9 L2566.2 803.3 L2564.8 806.8 L2563.5 810.4 L2562.1 814.1 L2560.9 817.8 L2559.6 821.6 L2558.4 825.3 L2557.2 829.0 L2556.1 832.7 L2555.1 836.3 L2554.2 839.8 L2553.3 843.4 L2552.5 847.2 L2551.6 851.1 L2550.8 855.2 L2550.0 859.4 L2549.2 863.7 L2548.5 868.0 L2547.7 872.4 L2547.0 876.7 L2546.3 881.0 L2545.7 885.1 L2545.0 889.2 L2544.4 893.2 L2543.9 896.9 L2543.4 900.5 L2542.9 903.8 L2542.5 906.8 L2542.1 909.6 L2541.7 912.0 L2541.4 914.0 L2543.4 914.4 L2543.8 912.4 L2544.4 910.0 L2544.9 907.2 L2545.5 904.2 L2546.1 900.9 L2546.8 897.4 L2547.5 893.7 L2548.3 889.8 L2549.1 885.7 L2549.9 881.6 L2550.7 877.4 L2551.6 873.1 L2552.5 868.8 L2553.4 864.5 L2554.3 860.3 L2555.3 856.2 L2556.2 852.2 L2557.2 848.3 L2558.2 844.7 L2559.2 841.2 L2560.3 837.8 L2561.4 834.3 L2562.6 830.8 L2563.9 827.2 L2565.3 823.6 L2566.7 819.9 L2568.1 816.3 L2569.5 812.7 L2570.9 809.2 L2572.3 805.7 L2573.6 802.3 L2574.9 799.0 L2576.2 795.8 L2577.4 792.8 L2578.6 790.0 L2579.7 787.3 L2580.7 784.8 L2581.6 782.6 L2582.4 780.6 L2583.0 778.9 Z'/></g></svg>
<svg style='left:2.0px;top:481.0px' width='48' height='48' viewBox='-24.0 -24.0 48 48' fill='none' stroke='#2f7ff0' stroke-width='4.2' stroke-linecap='butt' stroke-linejoin='miter'  ><path d='M-6 -7 V5 H8'/></svg>
<svg style='left:3726.0px;top:532.0px' width='48' height='48' viewBox='-24.0 -24.0 48 48' fill='none' stroke='#3b82f0' stroke-width='2.6' stroke-linecap='round' stroke-linejoin='round' ><path d='M-7 3.5 L0 -3.5 L7 3.5'/></svg>
<svg style='left:3726.0px;top:2046.0px' width='48' height='48' viewBox='-24.0 -24.0 48 48' fill='none' stroke='#3b82f0' stroke-width='2.6' stroke-linecap='round' stroke-linejoin='round' ><path d='M-7 -3.5 L0 3.5 L7 -3.5'/></svg>
<svg style='left:3778.0px;top:492.0px' width='48' height='48' viewBox='-24.0 -24.0 48 48' fill='none' stroke='#34506d' stroke-width='2.6' stroke-linecap='round' stroke-linejoin='round' ><path d='M-10 -15 V15 M0 -15 V15 M10 -15 V15'/><path d='M-10 -7 L-6.5 -3.5 L-10 0 L-13.5 -3.5 Z M0 4 L3.5 7.5 L0 11 L-3.5 7.5 Z M10 -7 L13.5 -3.5 L10 0 L6.5 -3.5 Z' fill='#fff'/></svg>
<svg style='left:3778.0px;top:713.0px' width='48' height='48' viewBox='-24.0 -24.0 48 48' fill='none' stroke='#34506d' stroke-width='2.4' stroke-linecap='round' stroke-linejoin='round' ><rect x='-13' y='-13' width='10' height='10'/><rect x='3' y='-13' width='10' height='10'/><rect x='-13' y='3' width='10' height='10'/><rect x='3' y='3' width='10' height='10'/></svg>
<svg style='left:3778.0px;top:931.0px' width='48' height='48' viewBox='-24.0 -24.0 48 48' fill='none' stroke='#34506d' stroke-width='2.6' stroke-linecap='round' stroke-linejoin='round' ><path d='M-10 -15 V15 M0 -15 V15 M10 -15 V15'/><path d='M-10 -7 L-6.5 -3.5 L-10 0 L-13.5 -3.5 Z M0 4 L3.5 7.5 L0 11 L-3.5 7.5 Z M10 -7 L13.5 -3.5 L10 0 L6.5 -3.5 Z' fill='#fff'/></svg>
<div class='t' style='left:3801px;top:549px;font-size:25px;color:#1a1a1a;transform-origin:0 0;transform:rotate(90deg) translate(0,-50%)'>Свойства</div>
<div class='t' style='left:3801px;top:769px;font-size:25px;color:#4a5560;transform-origin:0 0;transform:rotate(90deg) translate(0,-50%)'>Сервис</div>
<div class='t' style='left:3812px;top:989px;font-size:25px;color:#4a5560;transform-origin:0 0;transform:rotate(90deg) translate(0,-50%)'>Панель</div>
<div class='t' style='left:3790px;top:989px;font-size:25px;color:#4a5560;transform-origin:0 0;transform:rotate(90deg) translate(0,-50%)'>Пользователя</div>
<svg style='left:3468.0px;top:2111.0px' width='48' height='48' viewBox='-24.0 -24.0 48 48' fill='none' stroke='#5b7590' stroke-width='3' stroke-linecap='round' stroke-linejoin='round' ><path d='M-8 0 H8'/></svg>
<svg style='left:3724.0px;top:2111.0px' width='48' height='48' viewBox='-24.0 -24.0 48 48' fill='none' stroke='#5b7590' stroke-width='3' stroke-linecap='round' stroke-linejoin='round' ><path d='M-10 0 H10 M0 -10 V10'/></svg>
</body></html>
